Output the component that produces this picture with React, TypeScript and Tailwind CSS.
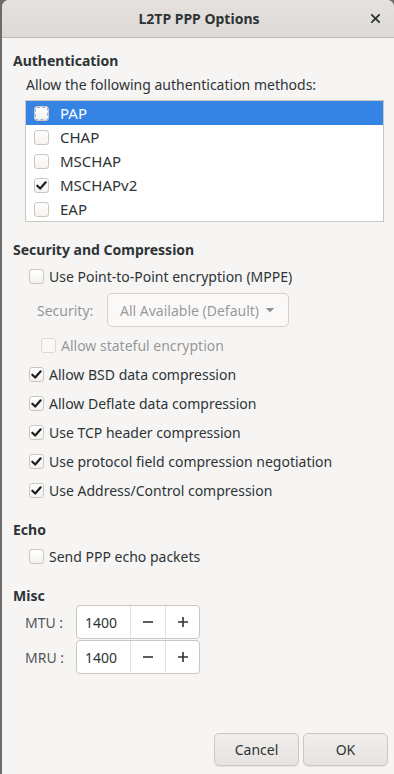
import { ReactNode } from 'react'

const font = { fontFamily: '"Noto Sans", "Open Sans", sans-serif' }

const Check = ({ checked, disabled, focus }: { checked?: boolean; disabled?: boolean; focus?: boolean }) => (
  <span
    className={`flex h-[15px] w-[15px] shrink-0 items-center justify-center rounded-[3px] border ${
      disabled ? 'border-[#dcd8d4] bg-[#faf9f8]' : 'border-[#cdc7c2] bg-gradient-to-b from-white to-[#f4f2f0]'
    } ${focus ? 'outline outline-1 outline-dashed outline-offset-[-2px] outline-[#8fb5e8]' : ''}`}
  >
    {checked && (
      <svg viewBox="0 0 14 14" className="h-[13px] w-[13px]">
        <path d="M2.5 7.2 L5.6 10.2 L11.5 3.6" fill="none" stroke="#1c1f20" strokeWidth="2.4" strokeLinecap="round" strokeLinejoin="round" />
      </svg>
    )}
  </span>
)

const Option = ({ label, checked }: { label: string; checked?: boolean }) => (
  <div className="flex h-[29px] items-center gap-[5px] pl-[27px]">
    <Check checked={checked} />
    <span className="text-[#2e3436]">{label}</span>
  </div>
)

const Section = ({ title, children }: { title: string; children: ReactNode }) => (
  <div className="flex flex-col">
    <div className="pl-[11px] font-bold text-[#2e3436]">{title}</div>
    {children}
  </div>
)

const methods = [
  { name: 'PAP', checked: false },
  { name: 'CHAP', checked: false },
  { name: 'MSCHAP', checked: false },
  { name: 'MSCHAPv2', checked: true },
  { name: 'EAP', checked: false },
]

const Spin = ({ label }: { label: string }) => (
  <div className="flex items-center">
    <span className="w-[74px] shrink-0 whitespace-nowrap pl-[23px] text-[#2e3436]/85">{label}</span>
    <div className="flex h-[34px] w-[124px] rounded-[4px] border border-[#cdc7c2] bg-white">
      <span className="flex w-[53px] items-center pl-[8px] text-[#2e3436]">1400</span>
      <span className="flex w-[35px] items-center justify-center border-l border-[#e4e1de]">
        <svg viewBox="0 0 12 12" className="h-[12px] w-[12px]">
          <path d="M1 6 H11" stroke="#2e3436" strokeWidth="1.6" />
        </svg>
      </span>
      <span className="flex flex-1 items-center justify-center border-l border-[#e4e1de]">
        <svg viewBox="0 0 12 12" className="h-[12px] w-[12px]">
          <path d="M1 6 H11 M6 1 V11" stroke="#2e3436" strokeWidth="1.6" />
        </svg>
      </span>
    </div>
  </div>
)

export default function App() {
  return (
    <div className="h-[774px] w-[394px] overflow-hidden bg-[#6b6b6b] text-[14px]" style={font}>
      <div className="ml-[2px] flex h-full flex-col overflow-hidden rounded-t-[7px] bg-[#f6f5f4]">
        {/* Header bar */}
        <div className="relative flex h-[38px] shrink-0 items-center justify-center border-b border-[#bfb8b1] bg-gradient-to-b from-[#e4e1de] to-[#dedad6]">
          <span className="pl-[2px] font-bold text-[#2e3436]">L2TP PPP Options</span>
          <svg viewBox="0 0 12 12" className="absolute right-[13px] top-[13px] h-[11px] w-[11px]">
            <path d="M2 2 L10 10 M10 2 L2 10" stroke="#2e3436" strokeWidth="2" strokeLinecap="round" />
          </svg>
        </div>

        <div className="flex flex-1 flex-col pt-[12px]">
          <Section title="Authentication">
            <div className="pl-[24px] pt-[3px] text-[#2e3436]">Allow the following authentication methods:</div>
            <div className="ml-[23px] mr-[10px] mt-[5px] h-[122px] overflow-hidden border border-[#cdc7c2] bg-white">
              {methods.map((m, i) => (
                <div
                  key={m.name}
                  className={`flex h-[24px] items-center gap-[11px] pl-[8px] text-[15px] ${i === 0 ? 'bg-[#3584e4] text-white' : 'text-[#2e3436]'}`}
                >
                  <Check checked={m.checked} focus={i === 0} />
                  <span>{m.name}</span>
                </div>
              ))}
            </div>
          </Section>

          <div className="mt-[17px]">
            <Section title="Security and Compression">
              <div className="mt-[2px]">
                <Option label="Use Point-to-Point encryption (MPPE)" />
              </div>
              <div className="mt-[2px] flex items-center pl-[35px]">
                <span className="w-[70px] text-[#2e3436]/50">Security:</span>
                <div className="flex h-[34px] w-[182px] items-center gap-[6px] rounded-[5px] border border-[#d6d1cd] bg-[#faf9f8] pl-[12px] text-[#2e3436]/50">
                  <span>All Available (Default)</span>
                  <svg viewBox="0 0 10 6" className="h-[5px] w-[10px]">
                    <path d="M0 0 H10 L5 5 Z" fill="#8c9092" />
                  </svg>
                </div>
              </div>
              <div className="mt-[4px] flex h-[29px] items-center gap-[5px] pl-[39px]">
                <Check disabled />
                <span className="text-[#2e3436]/50">Allow stateful encryption</span>
              </div>
              <Option label="Allow BSD data compression" checked />
              <Option label="Allow Deflate data compression" checked />
              <Option label="Use TCP header compression" checked />
              <Option label="Use protocol field compression negotiation" checked />
              <Option label="Use Address/Control compression" checked />
            </Section>
          </div>

          <div className="mt-[14px]">
            <Section title="Echo">
              <div className="mt-[2px]">
                <Option label="Send PPP echo packets" />
              </div>
            </Section>
          </div>

          <div className="mt-[14px]">
            <Section title="Misc">
              <div className="-mt-px flex flex-col gap-px">
                <Spin label="MTU :" />
                <Spin label="MRU :" />
              </div>
            </Section>
          </div>

          <div className="mt-auto flex justify-end gap-[4px] pb-[8px] pr-[6px]">
            {['Cancel', 'OK'].map((b) => (
              <button
                key={b}
                className="flex h-[33px] w-[85px] items-center justify-center rounded-[5px] border border-[#cdc7c2] bg-gradient-to-b from-[#f0eeec] to-[#e6e3e0] text-[#2e3436] shadow-[0_1px_0_rgba(0,0,0,0.07)]"
              >
                {b}
              </button>
            ))}
          </div>
        </div>
      </div>
    </div>
  )
}
